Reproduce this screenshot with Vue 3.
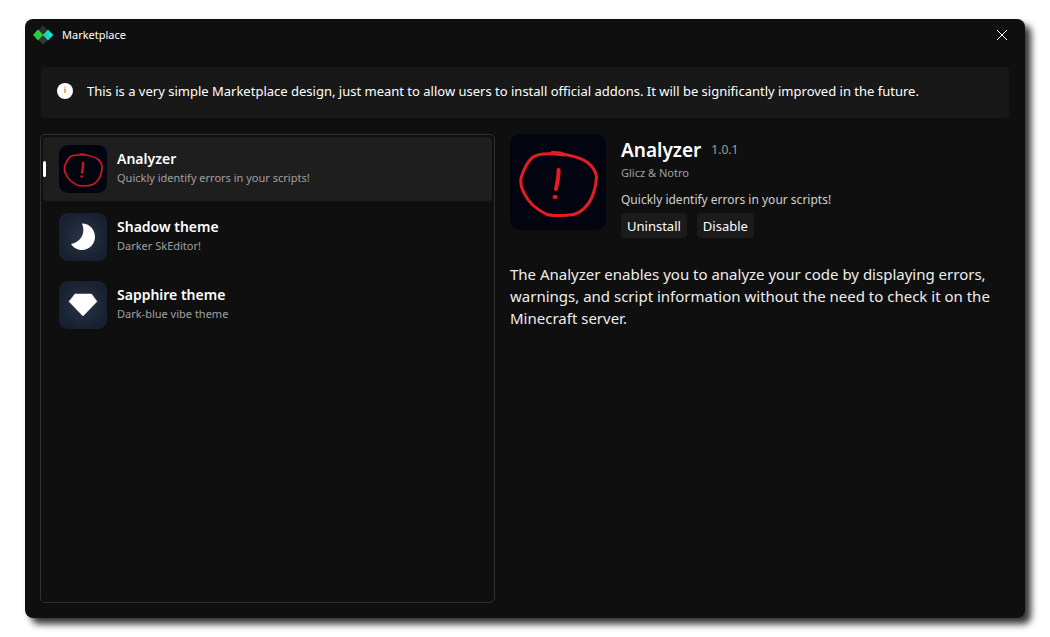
<script setup>
import { ref, computed } from 'vue'

const addons = [
  { id: 'analyzer', name: 'Analyzer', summary: 'Quickly identify errors in your scripts!' },
  { id: 'shadow', name: 'Shadow theme', summary: 'Darker SkEditor!' },
  { id: 'sapphire', name: 'Sapphire theme', summary: 'Dark-blue vibe theme' },
]
const selectedId = ref('analyzer')
const selected = computed(() => addons.find((a) => a.id === selectedId.value))
</script>

<template>
  <div class="desktop">
    <main class="window">
      <header class="titlebar">
        <svg class="logo" viewBox="0 0 20 20" aria-hidden="true">
          <path d="M10 0.5 L19.5 10 L10 19.5 L0.5 10Z" fill="#2b2e30" />
          <path d="M10 0.5 L14.5 5 L10 9.5 L5.5 5Z" fill="#2c2f31" />
          <path d="M10 10.5 L14.5 15 L10 19.5 L5.5 15Z" fill="#353839" />
          <path d="M5 4.5 L10 10 L5 15.5 L0 10Z" fill="#2fc936" />
          <path d="M5 5 L7.5 7.5 L5 10 L2.5 7.5Z" fill="#22d92a" />
          <path d="M7.5 7.5 L10 10 L7.5 12.5 L5 10Z" fill="#22c94e" />
          <path d="M15 4.5 L20 10 L15 15.5 L10 10Z" fill="#13dcc4" />
          <path d="M17.5 7.5 L20 10 L17.5 12.5 L15 10Z" fill="#0ce8e4" />
          <path d="M12.5 7.5 L15 10 L12.5 12.5 L10 10Z" fill="#21d39b" />
        </svg>
        <h1 class="title">Marketplace</h1>
        <button class="close" type="button" aria-label="Close">
          <svg viewBox="0 0 12 12" aria-hidden="true">
            <path d="M1 1 L11 11 M11 1 L1 11" fill="none" stroke="#fff" stroke-width="1" />
          </svg>
        </button>
      </header>

      <section class="banner">
        <svg class="info" viewBox="0 0 16 16" aria-hidden="true">
          <circle cx="8" cy="8" r="8" fill="#fff" />
          <path d="M7.5 5.5 V10" stroke="#eda765" stroke-width="1" />
          <path d="M8.5 5.5 V10" stroke="#8cbfe8" stroke-width="1" />
          <path d="M7.5 3.5 V4.5" stroke="#eda765" stroke-width="1" />
          <path d="M8.5 3.5 V4.5" stroke="#8cbfe8" stroke-width="1" />
        </svg>
        <p>This is a very simple Marketplace design, just meant to allow users to install official addons. It will be significantly improved in the future.</p>
      </section>

      <div class="content">
        <nav class="list" aria-label="Addons">
          <button
            v-for="addon in addons"
            :key="addon.id"
            type="button"
            class="item"
            :class="{ active: addon.id === selectedId }"
            @click="selectedId = addon.id"
          >
            <svg v-if="addon.id === 'analyzer'" class="thumb" viewBox="0 0 96 96" aria-hidden="true">
              <rect width="96" height="96" rx="18" fill="#020410" />
              <g fill="none" stroke="#c81824" stroke-width="3.5" stroke-linecap="round" stroke-linejoin="round">
                <path d="M42 18 C50 18 53 19 55 20 C64 22 71 24 77 28 C82 32 86 38 86 43 C86 54 82 65 78 70 C72 78 66 81 59 81 C48 82 41 82 36 80 C26 75 18 68 14 59 C11 53 10 49 11 44 C14 34 17 28 23 23 C29 19 40 19 54 20" />
                <path d="M48 36 C49 43 47 49 46 55 M45 63 L45.5 63" stroke-width="5" />
              </g>
            </svg>
            <svg v-else-if="addon.id === 'shadow'" class="thumb" viewBox="0 0 48 48" aria-hidden="true">
              <defs>
                <radialGradient id="shadow-bg"><stop offset="0" stop-color="#2c3548" /><stop offset="1" stop-color="#182131" /></radialGradient>
              </defs>
              <rect width="48" height="48" rx="9" fill="url(#shadow-bg)" />
              <path d="M24 10.5 C31 11 36 17 36 24 C36 31 30 37 23 37 C18 37 14.5 34.5 12 31 C22 29 27 20 23 10.5Z" fill="#fff" />
            </svg>
            <svg v-else class="thumb" viewBox="0 0 48 48" aria-hidden="true">
              <defs>
                <radialGradient id="sapphire-bg"><stop offset="0" stop-color="#2c3548" /><stop offset="1" stop-color="#182131" /></radialGradient>
              </defs>
              <rect width="48" height="48" rx="9" fill="url(#sapphire-bg)" />
              <path d="M16 13 H32.5 L38 20.5 L24 35 L10 20.5Z" fill="#fff" stroke="#fff" stroke-width="0.5" stroke-linejoin="round" />
            </svg>
            <span class="label">
              <span class="name">{{ addon.name }}</span>
              <span class="summary">{{ addon.summary }}</span>
            </span>
          </button>
        </nav>

        <article class="details">
          <div class="head">
            <svg class="cover" viewBox="0 0 96 96" aria-hidden="true">
              <rect width="96" height="96" rx="10" fill="#020410" />
              <g fill="none" stroke="#e61c25" stroke-width="3" stroke-linecap="round" stroke-linejoin="round">
                <path d="M42 18.5 C50 18 53 19.5 55 20.5 C64 22 71 24 77 28 C82 32 86 38 86.5 43 C86 54 82 65 78 70 C72 78 66 81 59 81 C48 82 41 82 36 80 C26 75 18 68 14 59 C11 53 10 49 11 44 C14 34 17 28 23 23 C29 19 40 19 54 21" />
                <path d="M48.5 36 C49 43 47 49 46 55" stroke-width="4" />
                <path d="M44.5 63 L45.5 63" stroke-width="4" />
              </g>
            </svg>
            <div class="meta">
              <div class="heading">
                <h2>{{ selected.name }}</h2>
                <span class="version">1.0.1</span>
              </div>
              <p class="author">Glicz &amp; Notro</p>
              <p class="tagline">{{ selected.summary }}</p>
              <div class="actions">
                <button type="button">Uninstall</button>
                <button type="button">Disable</button>
              </div>
            </div>
          </div>
          <p class="description">The Analyzer enables you to analyze your code by displaying errors, warnings, and script information without the need to check it on the Minecraft server.</p>
        </article>
      </div>
    </main>
  </div>
</template>

<style>
body {
  margin: 0;
  background: #fff;
}
</style>

<style scoped>
.desktop {
  box-sizing: border-box;
  height: 100vh;
  padding: 19px 25px;
  overflow: hidden;
  font-family: "Segoe UI", "Noto Sans", "Open Sans", sans-serif;
  color: #fff;
}
h1, h2, p {
  margin: 0;
  font-weight: 400;
}
button {
  font: inherit;
  color: inherit;
  border: 0;
  background: none;
  padding: 0;
}
svg {
  display: block;
  flex: none;
}
.window {
  box-sizing: border-box;
  display: flex;
  flex-direction: column;
  height: 100%;
  padding-bottom: 15px;
  border-radius: 8px;
  background: #0f0f0f;
  box-shadow: 6px 6px 7px rgba(0, 0, 0, 0.8);
}
.titlebar {
  display: flex;
  align-items: center;
  height: 32px;
  margin-bottom: 16px;
  padding: 0 15px 0 8px;
}
.logo {
  width: 20px;
  height: 20px;
}
.title {
  flex: 1;
  margin-left: 9px;
  font-size: 11px;
  line-height: 18px;
}
.close {
  padding: 2px;
}
.close svg {
  width: 12px;
  height: 12px;
}
.banner {
  display: flex;
  align-items: center;
  margin: 0 16px 16px;
  padding: 14px 16px 17px;
  gap: 14px;
  border-radius: 4px;
  background: #181818;
  font-size: 13px;
  line-height: 20px;
}
.info {
  width: 16px;
  height: 16px;
}
.content {
  flex: 1;
  display: grid;
  grid-template-columns: 455fr 500fr;
  gap: 15px;
  min-height: 0;
  padding: 0 15px;
}
.list {
  display: flex;
  flex-direction: column;
  gap: 4px;
  padding: 2px;
  border: 1px solid #303030;
  border-radius: 5px;
}
.item {
  position: relative;
  display: flex;
  align-items: center;
  height: 64px;
  padding: 0 16px;
  gap: 10px;
  border-radius: 4px;
  text-align: left;
}
.item.active {
  background: #1e1e1e;
}
.item.active::before {
  content: "";
  position: absolute;
  left: 0;
  top: 24px;
  width: 3px;
  height: 16px;
  border-radius: 2px;
  background: #fff;
}
.thumb {
  width: 48px;
  height: 48px;
}
.label {
  display: flex;
  flex-direction: column;
  padding-bottom: 2px;
}
.name {
  font-size: 14px;
  font-weight: 600;
  line-height: 20px;
}
.summary {
  font-size: 11px;
  line-height: 18px;
  color: #a0a0a0;
}
.head {
  display: flex;
  gap: 15px;
}
.cover {
  width: 96px;
  height: 96px;
}
.heading {
  display: flex;
  align-items: center;
  gap: 10px;
}
h2 {
  font-size: 19px;
  font-weight: 600;
  line-height: 32px;
}
.version {
  font-size: 12px;
  line-height: 20px;
  color: #a0a0a0;
}
.author {
  font-size: 11px;
  line-height: 14px;
  color: #a0a0a0;
}
.tagline {
  margin-top: 10px;
  font-size: 12px;
  line-height: 20px;
  color: #cfcfcf;
}
.actions {
  display: flex;
  gap: 10px;
  margin-top: 3px;
}
.actions button {
  height: 25px;
  padding: 0 6px;
  border-radius: 4px;
  background: #1b1b1b;
  font-size: 13px;
  line-height: 20px;
}
.description {
  margin-top: 25px;
  font-size: 15px;
  line-height: 22px;
  color: #eee;
}
</style>
